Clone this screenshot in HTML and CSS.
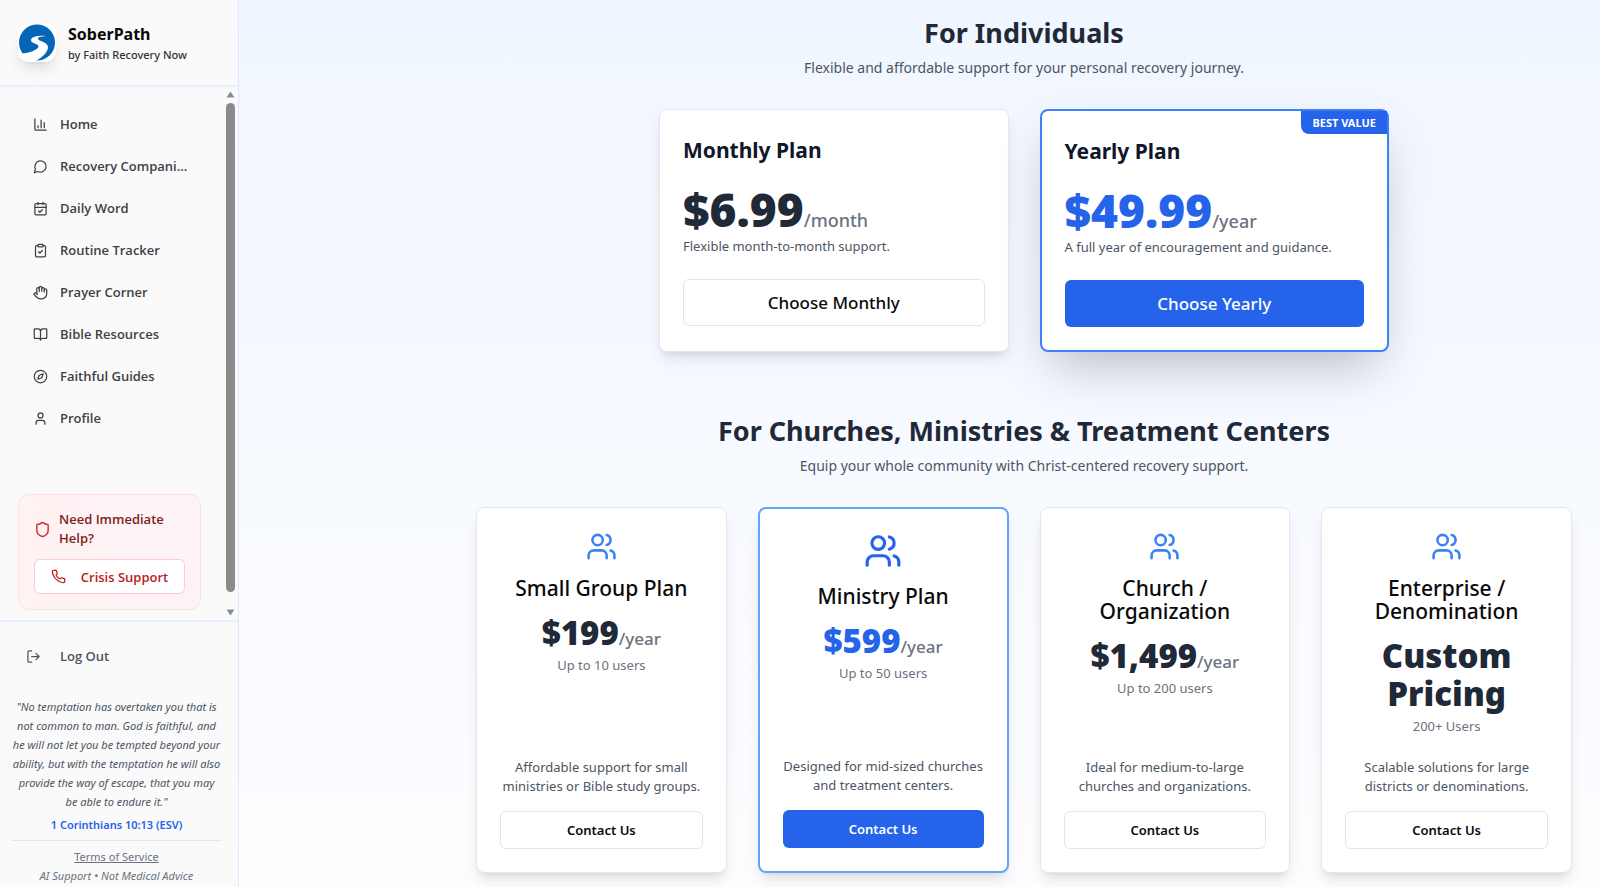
FILE: index.html
```html
<!DOCTYPE html>
<html lang="en">
<head>
  <meta charset="UTF-8">
  <meta name="viewport" content="width=device-width, initial-scale=1.0">
  <title>SoberPath - Plans</title>
  <link rel="stylesheet" href="styles.css">
</head>
<body>
  <aside class="sidebar">
    <header class="brand">
      <svg class="logo" viewBox="0 0 38 38">
        <circle cx="19" cy="18.500" r="18" fill="#0566b8"/>
        <path d="M28 12C22 11.500 13.500 12 13 16C12.500 19.500 20.500 19.500 20.500 22.500C20 26 11 29 4 29.500L0 38H15C22 35.500 30 29 30 23C30 18 19.500 17 20 14.500C20.500 12.500 25 12.500 28 12Z" fill="#fff"/>
      </svg>
      <div>
        <p class="brand-name">SoberPath</p>
        <p class="brand-by">by Faith Recovery Now</p>
      </div>
    </header>

    <div class="scroll-area">
      <div class="scroll-content">
        <nav class="menu">
          <a href="#"><svg class="icon" viewBox="0 0 24 24"><path d="M3 3v16a2 2 0 0 0 2 2h16M18 17V9M13 17V5M8 17v-3"/></svg><span>Home</span></a>
          <a href="#"><svg class="icon" viewBox="0 0 24 24"><path d="M7.900 20A9 9 0 1 0 4 16.100L2 22Z"/></svg><span>Recovery Compani...</span></a>
          <a href="#"><svg class="icon" viewBox="0 0 24 24"><path d="M8 2v4M16 2v4M3 10h18m-12 6 2 2 4-4"/><rect x="3" y="4" width="18" height="18" rx="2"/></svg><span>Daily Word</span></a>
          <a href="#"><svg class="icon" viewBox="0 0 24 24"><rect x="8" y="2" width="8" height="4" rx="1"/><path d="M16 4h2a2 2 0 0 1 2 2v14a2 2 0 0 1-2 2H6a2 2 0 0 1-2-2V6a2 2 0 0 1 2-2h2m1 10 2 2 4-4"/></svg><span>Routine Tracker</span></a>
          <a href="#"><svg class="icon" viewBox="0 0 24 24"><path d="M18 11V6a2 2 0 0 0-4 0M14 10V4a2 2 0 0 0-4 0v2M10 10.500V6a2 2 0 0 0-4 0v8"/><path d="M18 8a2 2 0 1 1 4 0v6a8 8 0 0 1-8 8h-2c-2.800 0-4.500-.86-5.990-2.340l-3.600-3.600a2 2 0 0 1 2.830-2.820L7 15"/></svg><span>Prayer Corner</span></a>
          <a href="#"><svg class="icon" viewBox="0 0 24 24"><path d="M12 7v14M3 18a1 1 0 0 1-1-1V4a1 1 0 0 1 1-1h5a4 4 0 0 1 4 4 4 4 0 0 1 4-4h5a1 1 0 0 1 1 1v13a1 1 0 0 1-1 1h-6a3 3 0 0 0-3 3 3 3 0 0 0-3-3z"/></svg><span>Bible Resources</span></a>
          <a href="#"><svg class="icon" viewBox="0 0 24 24"><circle cx="12" cy="12" r="10"/><path d="m16.240 7.760-1.804 5.411a2 2 0 0 1-1.265 1.265L7.760 16.240l1.804-5.411a2 2 0 0 1 1.265-1.265z"/></svg><span>Faithful Guides</span></a>
          <a href="#"><svg class="icon" viewBox="0 0 24 24"><path d="M19 21v-2a4 4 0 0 0-4-4H9a4 4 0 0 0-4 4v2"/><circle cx="12" cy="7" r="4"/></svg><span>Profile</span></a>
        </nav>

        <div class="help-card">
          <div class="help-title">
            <svg class="icon" viewBox="0 0 24 24"><path d="M20 13c0 5-3.500 7.500-7.660 8.950a1 1 0 0 1-.67-.01C7.500 20.500 4 18 4 13V6a1 1 0 0 1 1-1c2 0 4.500-1.200 6.240-2.720a1.170 1.170 0 0 1 1.520 0C14.510 3.810 17 5 19 5a1 1 0 0 1 1 1z"/></svg>
            <span>Need Immediate Help?</span>
          </div>
          <button type="button" class="crisis-btn">
            <svg class="icon" viewBox="0 0 24 24"><path d="M22 16.920v3a2 2 0 0 1-2.180 2 19.790 19.790 0 0 1-8.630-3.070 19.500 19.500 0 0 1-6-6 19.790 19.790 0 0 1-3.070-8.670A2 2 0 0 1 4.110 2h3a2 2 0 0 1 2 1.720 12.840 12.840 0 0 0 .7 2.810 2 2 0 0 1-.45 2.110L8.090 9.910a16 16 0 0 0 6 6l1.270-1.270a2 2 0 0 1 2.110-.45 12.840 12.840 0 0 0 2.810.7A2 2 0 0 1 22 16.920z"/></svg>
            Crisis Support
          </button>
        </div>
      </div>

      <div class="scrollbar">
        <svg viewBox="0 0 9 7"><path d="M4.500 0.500L8.500 6.500H0.500Z"/></svg>
        <div class="track"><div class="thumb"></div></div>
        <svg viewBox="0 0 9 7"><path d="M4.500 6.500L8.500 0.500H0.500Z"/></svg>
      </div>
    </div>

    <footer class="side-footer">
      <button type="button" class="logout">
        <svg class="icon" viewBox="0 0 24 24"><path d="M9 21H5a2 2 0 0 1-2-2V5a2 2 0 0 1 2-2h4M16 17l5-5-5-5M21 12H9"/></svg>
        Log Out
      </button>
      <p class="verse">"No temptation has overtaken you that is<br>not common to man. God is faithful, and<br>he will not let you be tempted beyond your<br>ability, but with the temptation he will also<br>provide the way of escape, that you may<br>be able to endure it."</p>
      <p class="verse-ref">1 Corinthians 10:13 (ESV)</p>
      <div class="legal">
        <a href="#">Terms of Service</a>
        <p>AI Support • Not Medical Advice</p>
      </div>
    </footer>
  </aside>

  <main class="content">
    <section class="plans">
      <h2>For Individuals</h2>
      <p class="lead">Flexible and affordable support for your personal recovery journey.</p>
      <div class="personal-grid">
        <article class="card">
          <h3>Monthly Plan</h3>
          <p class="price">$6.99<span>/month</span></p>
          <p class="note">Flexible month-to-month support.</p>
          <button type="button" class="btn btn-large">Choose Monthly</button>
        </article>
        <article class="card best">
          <span class="badge">BEST VALUE</span>
          <h3>Yearly Plan</h3>
          <p class="price">$49.99<span>/year</span></p>
          <p class="note">A full year of encouragement and guidance.</p>
          <button type="button" class="btn btn-large btn-blue">Choose Yearly</button>
        </article>
      </div>
    </section>

    <section class="plans">
      <h2>For Churches, Ministries &amp; Treatment Centers</h2>
      <p class="lead">Equip your whole community with Christ-centered recovery support.</p>
      <div class="group-grid">
        <article class="card group">
          <svg class="users" viewBox="0 0 24 24"><path d="M16 21v-2a4 4 0 0 0-4-4H6a4 4 0 0 0-4 4v2M22 21v-2a4 4 0 0 0-3-3.870M16 3.130a4 4 0 0 1 0 7.750"/><circle cx="9" cy="7" r="4"/></svg>
          <h3>Small Group Plan</h3>
          <p class="price">$199<span>/year</span></p>
          <p class="seats">Up to 10 users</p>
          <p class="about">Affordable support for small ministries or Bible study groups.</p>
          <button type="button" class="btn">Contact Us</button>
        </article>
        <article class="card group popular">
          <svg class="users" viewBox="0 0 24 24"><path d="M16 21v-2a4 4 0 0 0-4-4H6a4 4 0 0 0-4 4v2M22 21v-2a4 4 0 0 0-3-3.870M16 3.130a4 4 0 0 1 0 7.750"/><circle cx="9" cy="7" r="4"/></svg>
          <h3>Ministry Plan</h3>
          <p class="price">$599<span>/year</span></p>
          <p class="seats">Up to 50 users</p>
          <p class="about">Designed for mid-sized churches and treatment centers.</p>
          <button type="button" class="btn btn-blue">Contact Us</button>
        </article>
        <article class="card group">
          <svg class="users" viewBox="0 0 24 24"><path d="M16 21v-2a4 4 0 0 0-4-4H6a4 4 0 0 0-4 4v2M22 21v-2a4 4 0 0 0-3-3.870M16 3.130a4 4 0 0 1 0 7.750"/><circle cx="9" cy="7" r="4"/></svg>
          <h3>Church / Organization</h3>
          <p class="price">$1,499<span>/year</span></p>
          <p class="seats">Up to 200 users</p>
          <p class="about">Ideal for medium-to-large churches and organizations.</p>
          <button type="button" class="btn">Contact Us</button>
        </article>
        <article class="card group">
          <svg class="users" viewBox="0 0 24 24"><path d="M16 21v-2a4 4 0 0 0-4-4H6a4 4 0 0 0-4 4v2M22 21v-2a4 4 0 0 0-3-3.870M16 3.130a4 4 0 0 1 0 7.750"/><circle cx="9" cy="7" r="4"/></svg>
          <h3>Enterprise / Denomination</h3>
          <p class="price">Custom Pricing</p>
          <p class="seats">200+ Users</p>
          <p class="about">Scalable solutions for large districts or denominations.</p>
          <button type="button" class="btn">Contact Us</button>
        </article>
      </div>
    </section>
  </main>
</body>
</html>
```
FILE: styles.css
```css
*{
  box-sizing: border-box;
  margin: 0;
  padding: 0;
}
body{
  display: flex;
  height: 100vh;
  overflow: hidden;
  font-family: "Noto Sans", "Open Sans", sans-serif;
  font-size: 13px;
  color: #0a0a0a;
}
button{
  font-family: inherit;
  cursor: pointer;
}
a{
  color: inherit;
  text-decoration: none;
}
.icon{
  width: 15px;
  height: 15px;
  flex-shrink: 0;
  fill: none;
  stroke: currentColor;
  stroke-width: 2;
  stroke-linecap: round;
  stroke-linejoin: round;
}

/* sidebar */
.sidebar{
  width: 239px;
  flex-shrink: 0;
  display: flex;
  flex-direction: column;
  background-color: #fafafa;
  border-right: 1px solid #dbeafe;
}
.brand{
  height: 87px;
  flex-shrink: 0;
  display: flex;
  align-items: center;
  gap: 12px;
  padding: 0 18px;
  border-bottom: 2px solid #e6f0fe;
}
.logo{
  width: 38px;
  height: 38px;
  background-color: #fff;
  border-radius: 11px;
  box-shadow: 0 10px 15px -3px rgba(0,0,0,0.1), 0 4px 6px -4px rgba(0,0,0,0.1);
}
.brand-name{
  font-size: 16px;
  line-height: 24px;
  font-weight: 700;
}
.brand-by{
  font-size: 11px;
  line-height: 18px;
  font-weight: 500;
  color: #333;
}
.scroll-area{
  flex: 1;
  min-height: 0;
  display: flex;
}
.scroll-content{
  flex: 1;
  display: flex;
  flex-direction: column;
  justify-content: space-between;
  padding: 16px 22px 10px 18px;
}
.menu a{
  display: flex;
  align-items: center;
  gap: 12px;
  height: 42px;
  padding-left: 15px;
  font-family: "Open Sans", "Noto Sans", sans-serif;
  font-weight: 600;
  color: #3f3f46;
  white-space: nowrap;
}
.help-card{
  padding: 15px;
  border: 1px solid #fee2e2;
  border-radius: 11px;
  background: linear-gradient(to right, #fef2f2, #fdf2f8);
  font-family: "Open Sans", "Noto Sans", sans-serif;
}
.help-title{
  display: flex;
  align-items: center;
  gap: 8px;
  margin-bottom: 11px;
  line-height: 19px;
  font-weight: 600;
  color: #7f1d1d;
}
.help-title .icon{
  width: 17px;
  height: 17px;
  color: #dc2626;
}
.crisis-btn{
  width: 100%;
  height: 35px;
  display: flex;
  align-items: center;
  justify-content: center;
  gap: 15px;
  font-size: 13px;
  font-weight: 600;
  color: #b91c1c;
  background-color: #fff;
  border: 1px solid #fecaca;
  border-radius: 6px;
}
.scrollbar{
  width: 15px;
  display: flex;
  flex-direction: column;
  align-items: center;
  padding: 4px 0;
}
.scrollbar svg{
  width: 9px;
  height: 7px;
  fill: #8b8b8b;
}
.track{
  flex: 1;
  padding: 5px 0 17px;
}
.thumb{
  width: 9px;
  height: 100%;
  border-radius: 5px;
  background-color: #8b8b8b;
}
.side-footer{
  padding: 15px 16px 2px 11px;
  border-top: 2px solid #e6f0fe;
  text-align: center;
}
.logout{
  width: 100%;
  height: 38px;
  display: flex;
  align-items: center;
  gap: 19px;
  padding-left: 15px;
  border: none;
  background: none;
  font-family: "Open Sans", "Noto Sans", sans-serif;
  font-size: 13px;
  font-weight: 600;
  color: #4b5563;
}
.verse{
  margin-top: 22px;
  font-size: 11px;
  line-height: 19px;
  font-style: italic;
  color: #4b5563;
  white-space: nowrap;
}
.verse-ref{
  margin-top: 5px;
  padding-bottom: 6px;
  font-size: 11px;
  line-height: 18px;
  font-weight: 600;
  color: #2563eb;
}
.legal{
  padding-top: 6px;
  border-top: 1px solid #e5e7eb;
  font-size: 11px;
  line-height: 19px;
  color: #6b7280;
}
.legal a{
  text-decoration: underline;
}
.legal p{
  font-style: italic;
}

/* plans */
.content{
  flex: 1;
  padding: 15px 28px 14px 237px;
  background: linear-gradient(#f0f6ff, #fdfdff);
}
.plans{
  margin-bottom: 61px;
  text-align: center;
}
h2{
  font-size: 27px;
  line-height: 36px;
  font-weight: 700;
  color: #1f2937;
}
.lead{
  margin-top: 5px;
  font-size: 14px;
  line-height: 23px;
  color: #4b5563;
}
.personal-grid{
  display: grid;
  grid-template-columns: 1fr 1fr;
  gap: 31px;
  max-width: 730px;
  margin: 30px auto 0;
  text-align: left;
}
.group-grid{
  display: grid;
  grid-template-columns: repeat(4, 1fr);
  gap: 31px;
  margin-top: 30px;
}
.card{
  position: relative;
  display: flex;
  flex-direction: column;
  padding: 23px;
  background-color: #fff;
  border: 1px solid #e5e7eb;
  border-radius: 8px;
  box-shadow: 0 10px 15px -3px rgba(0,0,0,0.1), 0 4px 6px -4px rgba(0,0,0,0.1);
}
.best{
  border: 2px solid #3b82f6;
  box-shadow: 0 24px 48px -12px rgba(0,0,0,0.25);
}
.badge{
  position: absolute;
  top: 0;
  right: 0;
  padding: 0 11px;
  font-size: 11px;
  line-height: 23px;
  font-weight: 700;
  color: #fff;
  background-color: #2563eb;
  border-bottom-left-radius: 8px;
}
.card h3{
  font-size: 21px;
  line-height: 35px;
  font-weight: 700;
  color: #0f172a;
}
.price{
  margin-top: 18px;
  font-size: 46px;
  line-height: 46px;
  font-weight: 900;
  color: #1f2937;
}
.price span{
  font-size: 18px;
  line-height: 18px;
  font-weight: 500;
  color: #6b7280;
}
.best .price, .popular .price{
  color: #2563eb;
}
.note{
  margin-bottom: 18px;
  line-height: 29px;
  color: #4b5563;
}
.btn{
  width: 100%;
  height: 38px;
  font-size: 13px;
  font-weight: 600;
  color: #0a0a0a;
  background-color: #fff;
  border: 1px solid #e5e5e5;
  border-radius: 6px;
}
.btn-large{
  height: 47px;
  font-size: 17px;
  font-weight: 500;
}
.btn-blue{
  color: #fff;
  background-color: #2563eb;
  border: none;
}
.group{
  align-items: center;
}
.users{
  width: 31px;
  height: 31px;
  margin-bottom: 15px;
  fill: none;
  stroke: #3b82f6;
  stroke-width: 2;
  stroke-linecap: round;
  stroke-linejoin: round;
}
.popular{
  border: 2px solid #60a5fa;
}
.popular .users{
  width: 38px;
  height: 38px;
  stroke: #2563eb;
}
.group h3{
  line-height: 23px;
  font-weight: 500;
  color: #0a0a0a;
}
.group .price{
  margin-top: 14px;
  font-size: 33px;
  line-height: 38px;
}
.group .price span{
  font-size: 17px;
}
.seats{
  margin-top: 4px;
  line-height: 19px;
  color: #6b7280;
}
.about{
  margin-top: auto;
  margin-bottom: 15px;
  padding-top: 22px;
  line-height: 19px;
  color: #4b5563;
}
```
